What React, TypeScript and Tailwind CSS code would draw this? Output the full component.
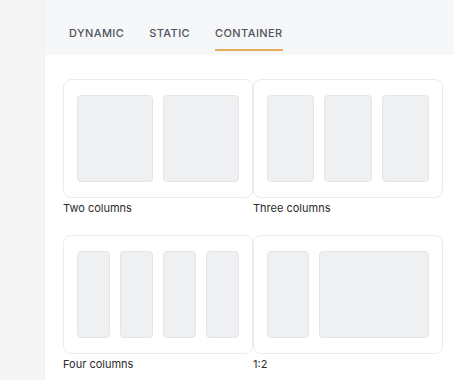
export default function App() {
  const layouts = [
    { label: "Two columns", cols: ["flex-1", "flex-1"] },
    { label: "Three columns", cols: ["flex-1", "flex-1", "flex-1"] },
    { label: "Four columns", cols: ["flex-1", "flex-1", "flex-1", "flex-1"] },
    { label: "1:2", cols: ["w-[42px]", "flex-1"] },
  ]

  return (
    <div className="flex h-[380px] w-[454px] overflow-hidden bg-[#f5f5f6] font-['Inter',sans-serif]">
      {/* sidebar strip */}
      <div className="w-[44px] shrink-0 bg-[#f5f5f6]" />

      <div className="flex flex-1 flex-col bg-white border-l border-[#efeff1]">
        {/* ================= TABS ================= */}
        <div className="flex h-[55px] shrink-0 items-start gap-[25px] bg-[#f6f7f9] pl-[24px] pt-[26px]">
          {["DYNAMIC", "STATIC", "CONTAINER"].map((t) => (
            <div
              key={t}
              className={
                t === "CONTAINER"
                  ? "border-b-2 border-[#e6ac5a] pb-[9px] text-[11px] leading-[14px] font-medium tracking-[0.4px] text-[#50535b]"
                  : "border-b-2 border-transparent pb-[9px] text-[11px] leading-[14px] font-medium tracking-[0.4px] text-[#50535b]"
              }
            >
              {t}
            </div>
          ))}
        </div>

        {/* ================= LAYOUT CARDS ================= */}
        <div className="grid grid-cols-[190px_190px] gap-y-[20px] pl-[18px] pt-[24px]">
          {layouts.map((l) => (
            <div key={l.label} className="flex flex-col">
              <div className="flex h-[119px] gap-[10px] rounded-[8px] border border-[#ececee] bg-white px-[13px] py-[15px]">
                {l.cols.map((c, i) => (
                  <div
                    key={i}
                    className={c + " rounded-[4px] border border-[#e4e5e8] bg-[#eff0f2]"}
                  />
                ))}
              </div>
              <div className="mt-[3px] text-[11px] leading-[14px] text-[#2b2b2b]">{l.label}</div>
            </div>
          ))}
        </div>
      </div>
    </div>
  )
}
